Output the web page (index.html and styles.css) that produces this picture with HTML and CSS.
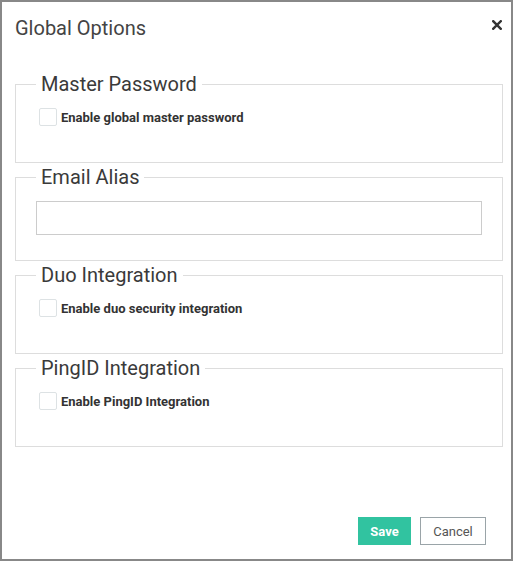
FILE: index.html
```html
<!DOCTYPE html>
<html>
<head>
<meta charset="utf-8">
<link rel="stylesheet" href="styles.css">
</head>
<body>
<div class="dialog">
  <div class="header">
    <h1 class="title">Global Options</h1>
    <button class="close" aria-label="Close">
      <svg width="10" height="10" viewBox="0 0 10 10"><path d="M1.2 1.2L8.8 8.8M8.8 1.2L1.2 8.8" stroke="#333" stroke-width="2.4" stroke-linecap="square"/></svg>
    </button>
  </div>
  <div class="content">
    <fieldset class="group">
      <legend>Master Password</legend>
      <label class="check"><input type="checkbox"><span>Enable global master password</span></label>
    </fieldset>
    <fieldset class="group group-input">
      <legend>Email Alias</legend>
      <input class="text" type="text">
    </fieldset>
    <fieldset class="group">
      <legend>Duo Integration</legend>
      <label class="check"><input type="checkbox"><span>Enable duo security integration</span></label>
    </fieldset>
    <fieldset class="group">
      <legend>PingID Integration</legend>
      <label class="check"><input type="checkbox"><span>Enable PingID Integration</span></label>
    </fieldset>
  </div>
  <div class="footer">
    <button class="btn btn-save">Save</button>
    <button class="btn btn-cancel">Cancel</button>
  </div>
</div>
</body>
</html>
```
FILE: styles.css
```css
html, body {
  margin: 0;
  padding: 0;
  background: #fff;
}
body {
  font-family: Roboto, "Liberation Sans", sans-serif;
  color: #333;
}
.dialog {
  box-sizing: border-box;
  width: 513px;
  height: 561px;
  border: 2px solid #888;
  display: flex;
  flex-direction: column;
  background: #fff;
}
.header {
  display: flex;
  justify-content: space-between;
  align-items: flex-start;
  padding: 14px 9px 0 13px;
}
.title {
  margin: 0;
  font-size: 20px;
  font-weight: 400;
  line-height: 24px;
  color: #444;
}
.close {
  border: 0;
  background: none;
  padding: 0;
  margin-top: 4px;
  width: 10px;
  height: 10px;
  display: flex;
}
.content {
  flex: 1;
  display: flex;
  flex-direction: column;
  gap: 2px;
  padding: 32px 8px 0 13px;
}
.group {
  margin: 0;
  border: 1px solid #ddd;
  padding: 0 20px 36px;
  min-width: 0;
}
.group legend {
  padding: 0 5px;
  font-size: 20px;
  line-height: 24px;
  color: #3a3a3a;
}
.group-input {
  padding-bottom: 25px;
}
.check {
  display: flex;
  align-items: center;
  margin-top: 12px;
  height: 18px;
  font-size: 13px;
  font-weight: 700;
  color: #333;
}
.check input {
  appearance: none;
  -webkit-appearance: none;
  box-sizing: border-box;
  width: 18px;
  height: 18px;
  margin: 0 4px 0 3px;
  border: 1px solid #dde2e4;
  border-radius: 2px;
  background: #fff;
}
.text {
  display: block;
  box-sizing: border-box;
  width: 100%;
  height: 34px;
  margin-top: 12px;
  border: 1px solid #ccc;
  padding: 0 8px;
  font-family: inherit;
}
.footer {
  display: flex;
  justify-content: flex-end;
  gap: 9px;
  padding: 0 25px 14px 0;
}
.btn {
  box-sizing: border-box;
  height: 28px;
  font-family: inherit;
  font-size: 13px;
  padding: 0;
  border-radius: 0;
}
.btn-save {
  width: 53px;
  background: #31c3a0;
  border: 1px solid #31c3a0;
  color: #fff;
  font-weight: 700;
}
.btn-cancel {
  width: 66px;
  background: #fff;
  border: 1px solid #9aa4a8;
  color: #555;
}
```
